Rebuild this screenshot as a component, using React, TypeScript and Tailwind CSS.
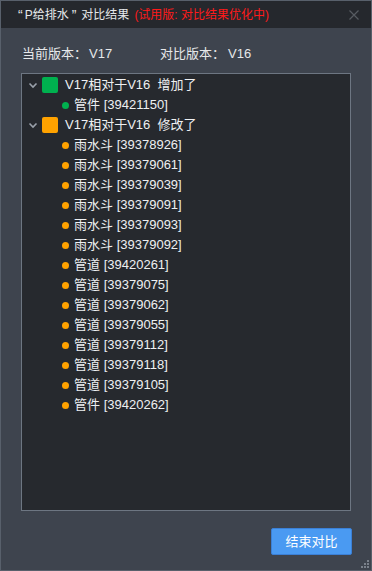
import React from "react";

const FONT = '"Liberation Sans", "Noto Sans CJK SC", sans-serif';

type Item = { name: string; id: string };

const added: Item[] = [{ name: "管件", id: "39421150" }];
const modified: Item[] = [
  { name: "雨水斗", id: "39378926" },
  { name: "雨水斗", id: "39379061" },
  { name: "雨水斗", id: "39379039" },
  { name: "雨水斗", id: "39379091" },
  { name: "雨水斗", id: "39379093" },
  { name: "雨水斗", id: "39379092" },
  { name: "管道", id: "39420261" },
  { name: "管道", id: "39379075" },
  { name: "管道", id: "39379062" },
  { name: "管道", id: "39379055" },
  { name: "管道", id: "39379112" },
  { name: "管道", id: "39379118" },
  { name: "管道", id: "39379105" },
  { name: "管件", id: "39420262" },
];

function Chevron() {
  return (
    <svg width="10" height="7" viewBox="0 0 10 7" className="shrink-0">
      <path d="M1.5 1.5 L5 5 L8.5 1.5" fill="none" stroke="#9aa1ab" strokeWidth="1.6" />
    </svg>
  );
}

function Group({ color, label, items }: { color: string; label: string; items: Item[] }) {
  return (
    <div className="flex flex-col">
      <div className="flex h-5 items-center">
        <div className="flex w-[20px] justify-center pl-[1px]">
          <Chevron />
        </div>
        <div className="h-4 w-4 rounded-[2px]" style={{ backgroundColor: color }} />
        <span className="ml-[7px] whitespace-pre text-[13px] text-[#eef0f2]">{label}</span>
      </div>
      {items.map((it) => (
        <div key={it.id} className="flex h-5 items-center pl-[40px]">
          <div className="h-[7px] w-[7px] rounded-full" style={{ backgroundColor: color }} />
          <span className="ml-[5px] text-[13px] text-[#eef0f2]">
            {it.name} [{it.id}]
          </span>
        </div>
      ))}
    </div>
  );
}

export default function App() {
  return (
    <div
      className="flex h-[571px] w-[372px] flex-col border border-[#58606b] bg-[#3e444e]"
      style={{ fontFamily: FONT }}
    >
      <div className="flex h-[27px] items-center bg-[#25282d] pl-[16px] pr-[12px]">
        <span className="flex items-center text-[12px] text-[#e6e8ea]">
          <span className="ml-[1px] mr-[2px] text-[14px] leading-none">“</span>
          P给排水
          <span className="ml-[3px] mr-[5px] text-[14px] leading-none">”</span>
          对比结果
        </span>
        <span className="ml-[5px] text-[12px] text-[#ff1a1a]">(试用版: 对比结果优化中)</span>
        <div className="flex-1" />
        <svg width="10" height="10" viewBox="0 0 10 10">
          <path d="M0.5 0.5 L9.5 9.5 M9.5 0.5 L0.5 9.5" stroke="#575b61" strokeWidth="1.2" />
        </svg>
      </div>
      <div className="flex h-[37px] items-center pl-[21px] pt-[14px] text-[13px] text-[#e6e8ea]">
        <span className="w-[67px]">当前版本：</span>
        <span className="w-[71px]">V17</span>
        <span className="w-[68px]">对比版本：</span>
        <span>V16</span>
      </div>
      <div className="ml-[20px] mt-[8px] h-[438px] w-[330px] border border-[#6d7682] bg-[#26292e] pt-[1px]">
        <Group color="#00b14f" label="V17相对于V16  增加了" items={added} />
        <Group color="#ffa200" label="V17相对于V16  修改了" items={modified} />
      </div>
      <div className="flex justify-end pr-[19px] pt-[17px]">
        <button className="h-[27px] w-[81px] rounded-[2px] border border-[#3b80d6] bg-[#4a9af2] text-[13px] text-white">
          结束对比
        </button>
      </div>
      <div className="flex flex-1 items-end justify-end pb-[1px] pr-[1px]">
        <svg width="10" height="10" viewBox="0 0 10 10">
          <rect x="7" y="1" width="2" height="2" fill="#7a818b" />
          <rect x="4" y="4" width="2" height="2" fill="#7a818b" />
          <rect x="7" y="4" width="2" height="2" fill="#7a818b" />
          <rect x="1" y="7" width="2" height="2" fill="#7a818b" />
          <rect x="4" y="7" width="2" height="2" fill="#7a818b" />
          <rect x="7" y="7" width="2" height="2" fill="#7a818b" />
        </svg>
      </div>
    </div>
  );
}
